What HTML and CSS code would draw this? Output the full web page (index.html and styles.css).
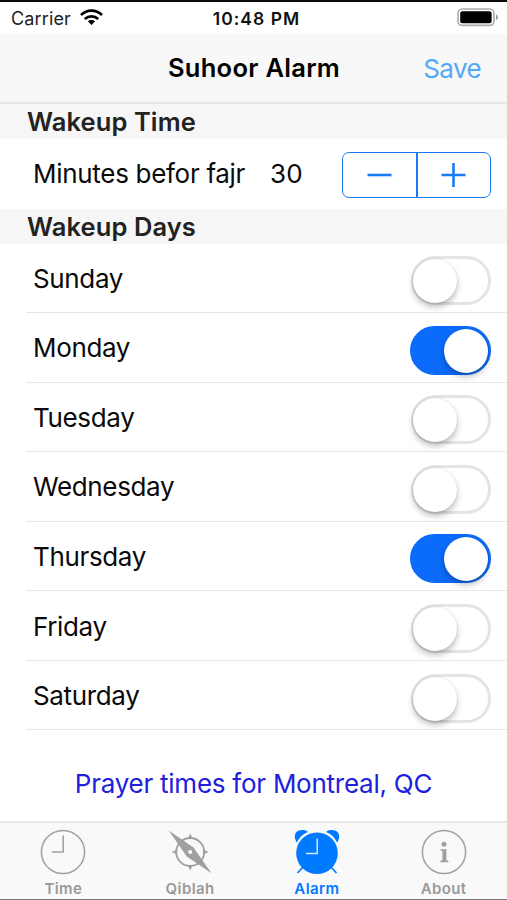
FILE: index.html
```html
<!DOCTYPE html>
<html lang="en">
<head>
<meta charset="utf-8">
<title>Suhoor Alarm</title>
<link rel="stylesheet" href="styles.css">
</head>
<body>
<div class="screen">
  <div class="status">
    <div class="carrier"><span class="carrier-name">Carrier</span>
      <svg class="wifi" width="23" height="17" viewBox="0 0 23 17" fill="none" stroke="#000" stroke-width="2.8"><path d="M1 6.1C7 .2 16 .2 22 6.1"/><path d="M4.8 10.1C8.7 6.4 14.3 6.4 18.2 10.1"/><path d="M11.5 16L7.8 12.3C10 10.5 13 10.5 15.2 12.3Z" fill="#000" stroke="none"/></svg>
    </div>
    <span class="clock">10:48 PM</span>
    <svg class="battery" width="42" height="19" viewBox="0 0 42 19"><rect x="1" y="1" width="36" height="16.4" rx="4.5" fill="#fff" stroke="#aaa" stroke-width="1.6"/><rect x="3.2" y="3.2" width="31.4" height="12" rx="2" fill="#000"/><path d="M39 6.2Q41 7.2 41 9.2T39 12.2Z" fill="#999"/></svg>
  </div>
  <header class="nav"><span></span><h1 class="title">Suhoor Alarm</h1><a class="save">Save</a></header>
  <main class="content">
    <h2 class="section">Wakeup Time</h2>
    <div class="minutes"><span class="label">Minutes befor fajr</span><span class="value">30</span>
      <div class="stepper">
        <div class="step"><svg width="26" height="26" viewBox="0 0 26 26"><path d="M1.5 13H25.5"/></svg></div>
        <div class="step"><svg width="26" height="26" viewBox="0 0 26 26"><path d="M.5 13H24.5M12.5 1V25"/></svg></div>
      </div>
    </div>
    <h2 class="section">Wakeup Days</h2>
    <div class="days">
      <div class="day"><span>Sunday</span><i class="switch"></i></div>
      <div class="day"><span>Monday</span><i class="switch on"></i></div>
      <div class="day"><span>Tuesday</span><i class="switch"></i></div>
      <div class="day"><span>Wednesday</span><i class="switch"></i></div>
      <div class="day"><span>Thursday</span><i class="switch on"></i></div>
      <div class="day"><span>Friday</span><i class="switch"></i></div>
      <div class="day"><span>Saturday</span><i class="switch"></i></div>
    </div>
    <div class="place"><span>Prayer times for Montreal, QC</span></div>
  </main>
  <nav class="tabs">
    <div class="tab"><svg width="48" height="48" viewBox="0 0 48 48" fill="none" stroke="#a0a0a0" stroke-width="1.5"><circle cx="24" cy="24" r="21.6"/><path d="M24.2 7.5V24H13"/></svg><span>Time</span></div>
    <div class="tab"><svg width="48" height="48" viewBox="0 0 48 48"><circle cx="24.2" cy="24" r="14" fill="none" stroke="#a0a0a0" stroke-width="1.8"/><path fill="#a0a0a0" d="M24.2 5.5L26.8 11H21.6ZM24.2 42.5L21.6 37H26.8ZM5.7 24L11.2 21.4V26.6ZM42.7 24L37.2 26.6V21.4Z"/><path d="M2.7 2.4L27.5 19.5L45.5 45.2L20.8 28.5Z" fill="#a0a0a0"/><circle cx="24.2" cy="24" r="2" fill="#f9f9f9"/></svg><span>Qiblah</span></div>
    <div class="tab active"><svg width="48" height="48" viewBox="0 0 48 48"><g fill="#007aff"><circle cx="24" cy="25.2" r="20.8"/><path d="M3.8 14.5C-.5 8 2.5 2 9 2C12 2 14 2.5 14.8 4C10 6 6.5 9.3 3.8 14.5ZM44.2 14.5C48.5 8 45.5 2 39 2C36 2 34 2.5 33.2 4C38 6 41.5 9.3 44.2 14.5Z"/></g><path d="M10 39L4.5 45M38 39L43.5 45" stroke="#007aff" stroke-width="1.7"/><path d="M24.2 10.5V25.5H13" fill="none" stroke="#d4e9ff" stroke-width="1.5"/></svg><span>Alarm</span></div>
    <div class="tab"><svg width="48" height="48" viewBox="0 0 48 48"><circle cx="24" cy="24" r="21.6" fill="none" stroke="#a0a0a0" stroke-width="1.5"/><g fill="#a0a0a0"><circle cx="24" cy="16.3" r="2.5"/><path d="M20.4 21.2H26.4V32.2L28.4 32.8V34.2H20.4V32.8L22.4 32.2V23.1L20.4 22.6Z"/></g></svg><span>About</span></div>
  </nav>
</div>
</body>
</html>
```

FILE: styles.css
```css
* { box-sizing: border-box; }
body { margin: 0; background: #fff; font-family: Inter, "Liberation Sans", sans-serif; color: #0a0a0a; }
.screen { width: 507px; height: 900px; display: flex; flex-direction: column; border-top: 2px solid #0b0b0b; border-bottom: 1px solid #777; overflow: hidden; }
h1, h2 { margin: 0; }
span, a { white-space: nowrap; }
.status { height: 32px; flex: none; display: grid; grid-template-columns: 1fr auto 1fr; align-items: center; padding: 0 8px 0 11px; }
.carrier { display: flex; align-items: center; gap: 9px; font-size: 18px; letter-spacing: .15px; color: #222; }
.wifi { margin-top: -2px; }
.clock { font-size: 17.5px; font-weight: 600; letter-spacing: 1.05px; margin-left: 3px; color: #111; }
.battery { justify-self: end; margin-top: -1px; }
.nav { height: 70px; flex: none; display: grid; grid-template-columns: 1fr auto 1fr; align-items: center; background: #f8f8f8; border-bottom: 2px solid #e6e6e6; padding: 0 26px 0 27px; }
.title { font-size: 25.5px; font-weight: 600; letter-spacing: .3px; margin-top: -1px; color: #000; }
.save { justify-self: end; font-size: 26px; letter-spacing: -.6px; color: #52a8fb; }
.content { flex: 1; display: flex; flex-direction: column; min-height: 0; }
.section { height: 35px; flex: none; background: #f6f6f6; padding-left: 27px; font-size: 25.5px; line-height: 36px; font-weight: 600; letter-spacing: .1px; color: #222; }
.minutes { height: 70px; flex: none; display: flex; align-items: center; padding: 0 16px 0 33px; font-size: 26px; }
.label { letter-spacing: -.3px; margin-top: -2px; }
.value { margin-left: 25px; margin-top: -2px; }
.stepper { margin-left: auto; margin-top: 1px; width: 149px; height: 46px; display: flex; border: 1.5px solid #187cf5; border-radius: 7px; }
.step { flex: 1; display: flex; align-items: center; justify-content: center; }
.step + .step { border-left: 2px solid #187cf5; }
.step path { stroke: #187cf5; stroke-width: 2.6; }
.days { margin-top: -.5px; }
.day { height: 69.55px; margin-left: 26px; padding: 6px 16px 0 7px; display: flex; align-items: center; justify-content: space-between; border-bottom: 1px solid #e6e6e6; font-size: 26px; letter-spacing: -.35px; }
.day span { margin-top: -5px; }
.switch { width: 80px; height: 49px; border-radius: 25px; border: 3px solid #e4e4e4; display: flex; }
.switch::before { content: ""; width: 44px; height: 44px; margin-left: -1px; border-radius: 50%; background: #fff; box-shadow: 0 4px 6px rgba(0,0,0,.26), 0 0 2px rgba(0,0,0,.12); }
.switch.on { width: 81px; background: #0b6cfb; border-color: #0b6cfb; justify-content: flex-end; }
.place { flex: 1; display: flex; align-items: center; justify-content: center; padding-top: 15px; font-size: 26px; letter-spacing: -.25px; color: #2020dc; }
.tabs { height: 78px; flex: none; display: grid; grid-template-columns: repeat(4, 1fr); background: #f9f9f9; border-top: 2px solid #ebebeb; }
.tab { display: flex; flex-direction: column; align-items: center; padding-top: 5px; color: #999; font-size: 15px; line-height: 18px; font-weight: 600; letter-spacing: .4px; }
.tab svg { flex: none; }
.tab span { margin-top: 4px; }
.active { color: #007aff; }
```
